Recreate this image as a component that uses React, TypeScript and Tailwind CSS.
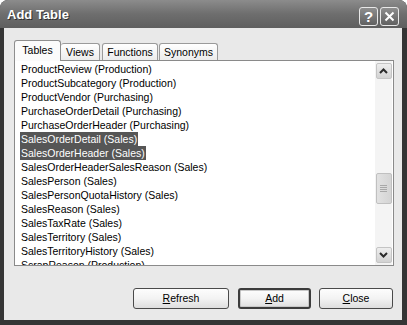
import React from "react";

const rows: { t: string; sel?: boolean }[] = [
  { t: "ProductReview (Production)" },
  { t: "ProductSubcategory (Production)" },
  { t: "ProductVendor (Purchasing)" },
  { t: "PurchaseOrderDetail (Purchasing)" },
  { t: "PurchaseOrderHeader (Purchasing)" },
  { t: "SalesOrderDetail (Sales)", sel: true },
  { t: "SalesOrderHeader (Sales)", sel: true },
  { t: "SalesOrderHeaderSalesReason (Sales)" },
  { t: "SalesPerson (Sales)" },
  { t: "SalesPersonQuotaHistory (Sales)" },
  { t: "SalesReason (Sales)" },
  { t: "SalesTaxRate (Sales)" },
  { t: "SalesTerritory (Sales)" },
  { t: "SalesTerritoryHistory (Sales)" },
  { t: "ScrapReason (Production)" },
];

function Chevron({ up }: { up?: boolean }) {
  return (
    <svg width="9" height="6" viewBox="0 0 9 6">
      <path
        d={up ? "M1 5 L4.5 1.5 L8 5" : "M1 1 L4.5 4.5 L8 1"}
        fill="none"
        stroke="#2a2a2a"
        strokeWidth="2"
      />
    </svg>
  );
}

function Btn({
  label,
  u,
  w,
  def,
}: {
  label: string;
  u: string;
  w: string;
  def?: boolean;
}) {
  return (
    <div
      className={`${w} h-[21px] rounded-[3px] flex items-center justify-center text-[10.5px] text-black bg-gradient-to-b from-[#fdfdfd] via-[#f3f3f3] to-[#dedede] ${
        def
          ? "border-[2px] border-[#3c3c3c] shadow-[inset_0_0_0_1px_#c8c8c8]"
          : "border border-[#4a4a4a]"
      }`}
    >
      <span>
        <span className="underline">{u}</span>
        {label}
      </span>
    </div>
  );
}

export default function App() {
  return (
    <div
      className="w-[407px] h-[325px] bg-white overflow-hidden"
      style={{ fontFamily: '"Liberation Sans", Arial, sans-serif' }}
    >
      <div className="w-full h-full flex flex-col rounded-t-[8px] bg-[#353535] overflow-hidden">
        {/* Title bar */}
        <div className="h-[28px] shrink-0 flex items-start pl-[7px] pr-[8px] bg-gradient-to-b from-[#8c8c8c] via-[#6e6e6e] to-[#5f5f5f]">
          <span className="mt-[7px] text-white font-bold text-[13px] leading-[16px] [text-shadow:1px_1px_0_#2e2e2e]">
            Add Table
          </span>
          <div className="ml-auto mt-[7px] flex gap-[2px]">
            <div className="w-[19px] h-[19px] rounded-[3px] border border-[#e8e8e8] bg-gradient-to-b from-[#8e8e8e] to-[#616161] flex items-center justify-center text-white font-bold text-[15px] leading-none">
              ?
            </div>
            <div className="w-[19px] h-[19px] rounded-[3px] border border-[#e8e8e8] bg-gradient-to-b from-[#8e8e8e] to-[#616161] flex items-center justify-center">
              <svg width="11" height="11" viewBox="0 0 11 11">
                <path d="M1.5 1.5 L9.5 9.5 M9.5 1.5 L1.5 9.5" stroke="#fff" strokeWidth="2" />
              </svg>
            </div>
          </div>
        </div>

        {/* Client area */}
        <div className="flex-1 ml-[4px] mr-[5px] mb-[5px] bg-[#e9e9e9] flex flex-col pt-[12px] pl-[10px] pr-[8px] text-black">
          {/* Tabs */}
          <div className="h-[20px] flex items-end text-[10.5px] relative z-10">
            <div className="w-[47px] h-[21px] -mb-[1px] rounded-t-[3px] border border-b-0 border-[#8e8e8e] bg-[#fbfbfb] flex items-center justify-center pb-[1px]">
              Tables
            </div>
            <div className="w-[39px] h-[17px] rounded-t-[3px] border border-l-0 border-b-0 border-[#9a9a9a] bg-gradient-to-b from-white to-[#ececec] flex items-center justify-center pt-[1px]">
              Views
            </div>
            <div className="ml-[2px] w-[56px] h-[17px] rounded-t-[3px] border border-b-0 border-[#9a9a9a] bg-gradient-to-b from-white to-[#ececec] flex items-center justify-center pt-[1px]">
              Functions
            </div>
            <div className="ml-[1px] w-[59px] h-[17px] rounded-t-[3px] border border-b-0 border-[#9a9a9a] bg-gradient-to-b from-white to-[#ececec] flex items-center justify-center pt-[1px]">
              Synonyms
            </div>
          </div>

          {/* List box */}
          <div className="h-[206px] border border-[#8a8a8a] bg-white flex overflow-hidden">
            <div className="flex-1 pt-[1px] pl-[5px] overflow-hidden text-[10.5px]">
              {rows.map((r) => (
                <div key={r.t} className="h-[14px] leading-[14px] whitespace-nowrap">
                  <span
                    className={`inline-block px-[1px] h-[14px] ${
                      r.sel ? "bg-[#565656] text-white" : ""
                    }`}
                  >
                    {r.t}
                  </span>
                </div>
              ))}
            </div>
            {/* Scrollbar */}
            <div className="w-[17px] mr-[1px] bg-[#f4f4f4] flex flex-col items-center py-[2px]">
              <div className="w-[16px] h-[16px] rounded-[2px] border border-[#c4c4c4] bg-gradient-to-b from-[#eeeeee] to-[#d2d2d2] flex items-center justify-center">
                <Chevron up />
              </div>
              <div className="flex-1 w-full flex flex-col items-center">
                <div className="mt-[94px] w-[16px] h-[31px] rounded-[2px] border border-[#c0c0c0] bg-gradient-to-r from-[#e2e2e2] to-[#d4d4d4] flex flex-col items-center justify-center gap-[1px]">
                  <div className="w-[7px] h-[1px] bg-[#a8a8a8]" />
                  <div className="w-[7px] h-[1px] bg-[#a8a8a8]" />
                  <div className="w-[7px] h-[1px] bg-[#a8a8a8]" />
                  <div className="w-[7px] h-[1px] bg-[#a8a8a8]" />
                </div>
              </div>
              <div className="w-[16px] h-[16px] rounded-[2px] border border-[#c4c4c4] bg-gradient-to-b from-[#eeeeee] to-[#d2d2d2] flex items-center justify-center">
                <Chevron />
              </div>
            </div>
          </div>

          {/* Buttons */}
          <div className="mt-[22px] flex justify-end pr-[1px]">
            <Btn u="R" label="efresh" w="w-[96px]" />
            <div className="w-[9px]" />
            <Btn u="A" label="dd" w="w-[73px]" def />
            <div className="w-[8px]" />
            <Btn u="C" label="lose" w="w-[74px]" />
          </div>
        </div>
      </div>
    </div>
  );
}
